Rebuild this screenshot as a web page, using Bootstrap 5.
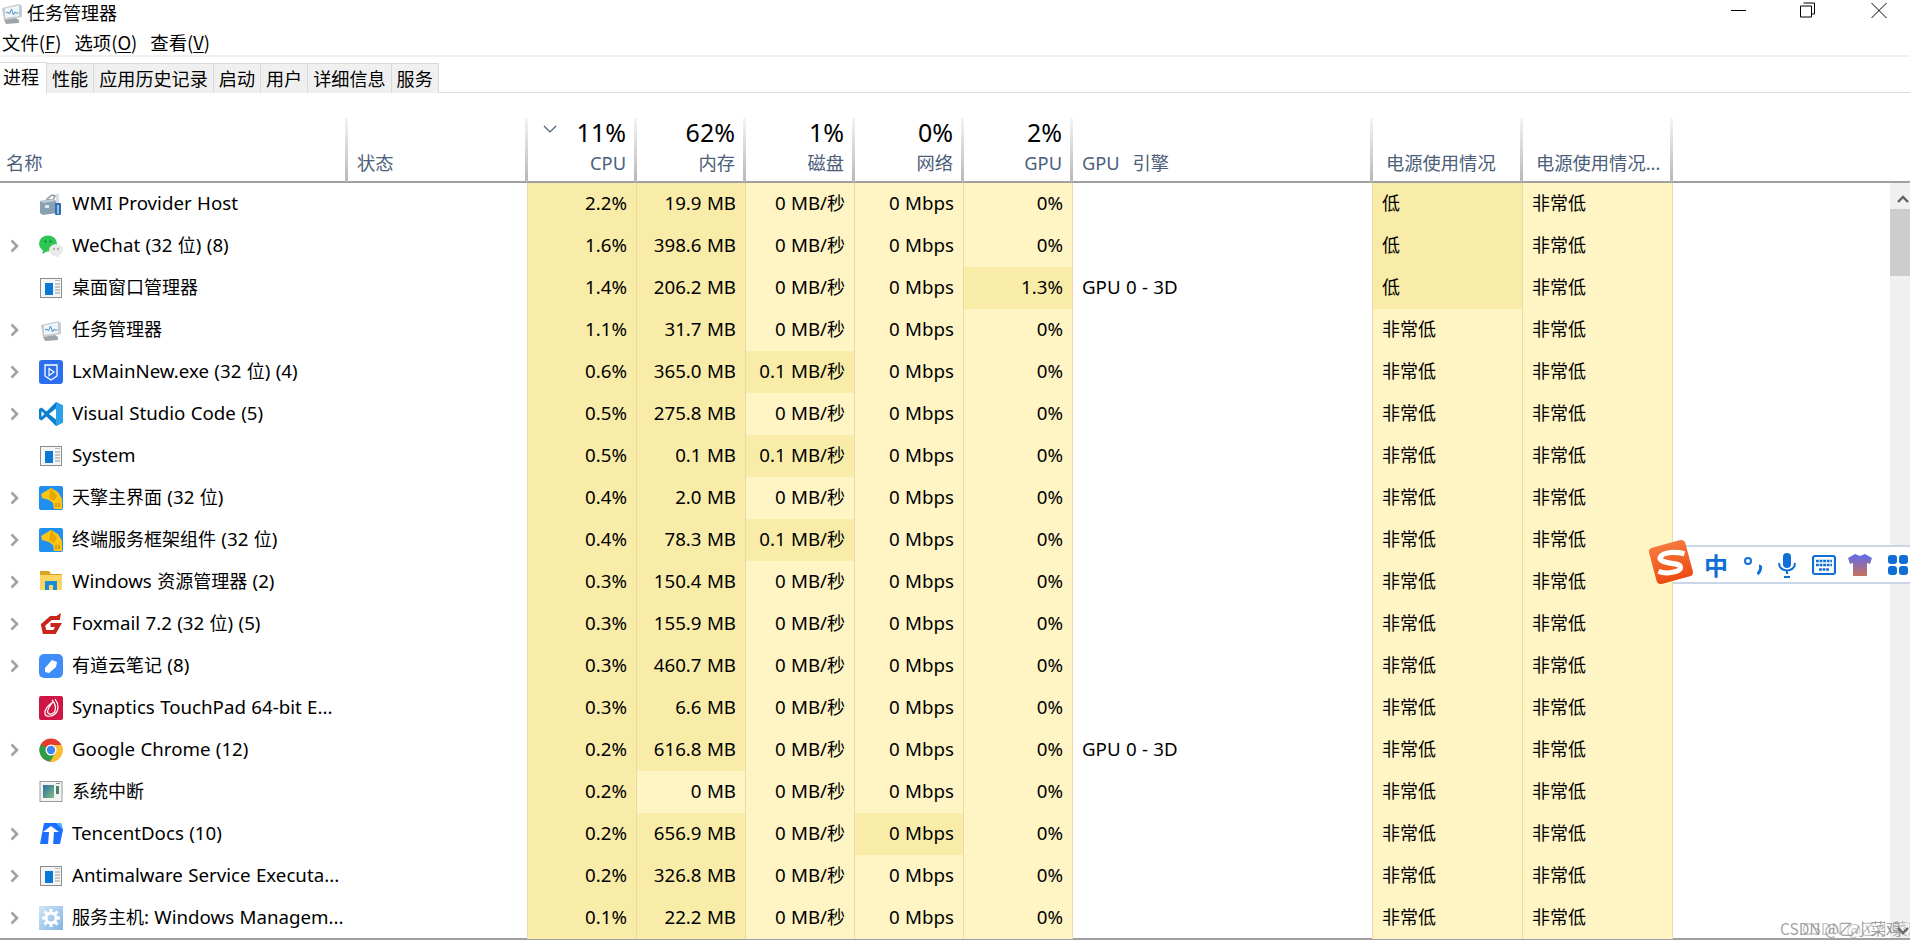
<!DOCTYPE html>
<html lang="zh">
<head>
    <meta charset="utf-8">
    <title>任务管理器</title>
    <link href="https://cdn.jsdelivr.net/npm/bootstrap@5.3.0/dist/css/bootstrap.min.css" rel="stylesheet">
    <style>
        html, body { height: 100%; }
        body { position: relative; width: 1910px; height: 948px; overflow: hidden; background: #fff; color: #000;
               font-family: "Noto Sans", "Noto Sans CJK SC", sans-serif; font-size: 18.7px; line-height: 1; word-spacing: .5px; }
        .cjk { font-family: "Noto Sans CJK SC", "Noto Sans", sans-serif; font-size: 18px; }
        .title-row { height: 28px; padding: 0 0 5px 27px; position: relative; }
        .title-row svg.app { position: absolute; left: 0; top: 1px; }
        .win-btn { position: absolute; top: 0; }
        .menu-row { height: 29px; padding: 1px 0 0 2px; gap: 13px; border-bottom: 2px solid #f0f0f0; }
        .menu-row.cjk { font-size: 18.4px; }
        .menu-row u { text-underline-offset: 2px; }
        .tm-tabs { margin-top: 5px; height: 31px; border-bottom: 1px solid #d9d9d9; }
        .tm-tabs.cjk { font-size: 18.1px; }
        .tm-tabs .nav-link { height: 30px; margin: 1px 0 0; padding: 0 5px; line-height: 28px; color: #000; background: #f0f0f0;
                             border: 1px solid #d9d9d9; border-left: 0; border-bottom: 0; border-radius: 0; }
        .tm-tabs .nav-link.active { height: 31px; margin-top: 0; padding: 0 0 0 3px; line-height: 27px; background: #fff; color: #000;
                                    border: 1px solid #d9d9d9; border-left: 0; border-bottom: 0; width: 47px; }
        .head-wrap { margin-top: 25px; border-bottom: 2px solid #a0a0a0; height: 65px; }
        .tm-grid { table-layout: fixed; width: 1673px; border-collapse: separate; border-spacing: 0; }
        .tm-grid th:nth-child(1), .tm-grid td:nth-child(1) { width: 348px; }
        .tm-grid th:nth-child(2), .tm-grid td:nth-child(2) { width: 180px; }
        .tm-grid th:nth-child(3), .tm-grid td:nth-child(3),
        .tm-grid th:nth-child(4), .tm-grid td:nth-child(4),
        .tm-grid th:nth-child(5), .tm-grid td:nth-child(5),
        .tm-grid th:nth-child(6), .tm-grid td:nth-child(6),
        .tm-grid th:nth-child(7), .tm-grid td:nth-child(7) { width: 109px; }
        .tm-grid th:nth-child(8), .tm-grid td:nth-child(8) { width: 300px; }
        .tm-grid th:nth-child(9), .tm-grid td:nth-child(9),
        .tm-grid th:nth-child(10), .tm-grid td:nth-child(10) { width: 150px; }
        .tm-grid th { height: 64px; padding: 0 9px; vertical-align: bottom; font-weight: 400; color: #4c607a;
                      background: linear-gradient(#f4f4f4, #b8b8b8) right top / 3px 100% no-repeat; position: relative; white-space: nowrap; }
        .tm-grid th .lbl { display: block; height: 30px; font-size: 18.3px; line-height: 22px; }
        .tm-grid th .lbl.gap-word { word-spacing: 8px; }
        .tm-grid th .lbl.pw-lbl { padding-left: 4px; }
        .tm-grid th .pct { display: block; font-size: 25px; line-height: 29px; height: 34px; color: #000; }
        .tm-grid th .sort-mark { position: absolute; left: 15px; top: 7px; }
        .tm-grid th.num { text-align: right; padding-right: 11px; }
        .tm-grid th.first { padding-left: 6px; }
        .body-wrap { height: 757px; border-bottom: 2px solid #a0a0a0; }
        .tm-grid td { height: 42px; padding: 0 9px 2px; vertical-align: middle; border-right: 1px solid #ecdaa2; white-space: nowrap; overflow: hidden; }
        .tm-grid td:first-child { border-right: 0; padding: 0; }
        .tm-grid td.num { text-align: right; padding-right: 9px; }
        .tm-grid td.lo { background: #fff4c4; }
        .tm-grid td.hi { background: #f9eca8; }
        .name-cell { position: relative; height: 42px; padding-left: 72px; line-height: 39px; }
        .name-cell .arrow { position: absolute; left: 10px; top: 14px; }
        .name-cell .appicon { position: absolute; left: 39px; top: 9px; }
        .scroll-track { width: 20px; margin-left: auto; background: #f0f0f0; position: relative; }
        .scroll-thumb { position: absolute; left: 0; top: 26px; width: 20px; height: 67px; background: #cdcdcd; }
        .scroll-btn { position: absolute; left: 7px; }
        .ime-bar { position: absolute; left: 1673px; top: 545px; width: 237px; height: 39px; background: #fff;
                   border-top: 2px solid #c9d6e6; border-bottom: 2px solid #c9d6e6; }
        .ime-bar > * { position: absolute; }
        .ime-logo { position: absolute; left: 1647px; top: 538px; }
        .ime-zh { left: 31px; top: 5px; font-weight: 700; color: #0f6fd6; line-height: 26px; }
        .ime-zh.cjk { font-size: 24px; }
        .mark-text { position: absolute; left: 1780px; top: 921px; color: rgba(120,120,120,.7); font-size: 15.5px; white-space: nowrap;
                     text-shadow: 22px 0 rgba(120,120,120,.45); }
        .mark-text.cjk { font-size: 15.5px; }
    </style>
</head>
<body>
    <svg width="0" height="0" class="position-absolute">
        <defs>
            <symbol id="ic-monitor" viewBox="0 0 24 24">
                <path d="M2 7l17-4 3 2v11l-18 3z" fill="#c4ccd2"/>
                <path d="M5 7.500l14-3v10.500l-14 2z" fill="#f0f5fa"/>
                <path d="M6 12l2-1 1.500 2 2-5 2 6 1.500-3 2 1.500 1.500-1" fill="none" stroke="#4b90cf" stroke-width="1"/>
                <path d="M4 19l12-2 3 2v3l-13 1z" fill="#9da5aa"/>
            </symbol>
            <symbol id="ic-wmi" viewBox="0 0 24 24">
                <path d="M8 7l5-4 3 1-2 4z" fill="none" stroke="#8d9499" stroke-width="1.500"/>
                <path d="M1 9l13-2 4 2v12l-14 2-3-2z" fill="#87a0b2"/>
                <path d="M1 9l13-2 4 2-14 2z" fill="#bdcbd5"/>
                <rect x="6" y="13" width="4" height="3" fill="#e4e9ec"/>
                <rect x="17" y="2" width="3" height="9" fill="#d8dde0"/>
                <rect x="16" y="11" width="6" height="12" rx="1" fill="#2f6db5"/>
                <rect x="18" y="13" width="2" height="9" fill="#8fc0ea"/>
            </symbol>
            <symbol id="ic-wechat" viewBox="0 0 24 24">
                <ellipse cx="9" cy="9.500" rx="9" ry="8" fill="#2dc653"/>
                <path d="M4 15l-.5 5 5-3z" fill="#2dc653"/>
                <circle cx="6.500" cy="7.500" r="1.100" fill="#0c7a2e"/><circle cx="11.500" cy="7.500" r="1.100" fill="#0c7a2e"/>
                <ellipse cx="17" cy="16" rx="7" ry="6" fill="#e9e9e9"/>
                <path d="M19 20l2 4-5-2z" fill="#e9e9e9"/>
                <circle cx="15" cy="15" r=".9" fill="#999"/><circle cx="19" cy="15" r=".9" fill="#999"/>
            </symbol>
            <symbol id="ic-window" viewBox="0 0 24 24">
                <rect x="1.500" y="2.500" width="21" height="19" fill="#f3f5f7" stroke="#8c8c8c"/>
                <rect x="6" y="7" width="8" height="12" fill="#0a78d7"/>
                <path d="M16 8h5M16 11h5M16 14h5M16 17h5" stroke="#9a9a9a"/>
                <path d="M16 4.500h5" stroke="#bbb"/>
            </symbol>
            <symbol id="ic-lx" viewBox="0 0 24 24">
                <rect width="24" height="24" rx="3" fill="#2b6fee"/>
                <path d="M6 5h12v11l-6 4-6-4z" fill="none" stroke="#fff" stroke-width="1.300"/>
                <path d="M10 8.500l5 3.500-5 3.500z" fill="none" stroke="#fff" stroke-width="1.200"/>
            </symbol>
            <symbol id="ic-code" viewBox="0 0 24 24">
                <path d="M17 0l7 3.500v17L17 24 7.500 14.500 2.500 18.500 0 17V7l2.500-1.500 5 4z" fill="#0b7fcf"/>
                <path d="M17 0l7 3.500v17L17 24z" fill="#2aa2ea"/>
                <path d="M17 6.500v11L10 12z" fill="#fff"/>
                <path d="M2.500 9v6L5.500 12z" fill="#fff"/>
            </symbol>
            <symbol id="ic-tianqing" viewBox="0 0 24 24">
                <rect width="24" height="24" rx="2" fill="#1f8ff0"/>
                <path d="M2 8l10-6 7 4 4 7v10h-8l-1-6-4-3-7-2z" fill="#ffc412"/>
                <path d="M12 2l6 8-3 5-5-3z" fill="#e6a800"/>
                <path d="M17 21v-4M20 21v-4" stroke="#a87a00"/>
            </symbol>
            <symbol id="ic-folder" viewBox="0 0 24 24">
                <path d="M1 1h9l2 3h11v3H1z" fill="#d9a520"/>
                <rect x="1" y="5" width="22" height="15" fill="#fcd664"/>
                <path d="M6 11h12v9h-4v-5h-4v5H6z" fill="#1b8ad8"/>
            </symbol>
            <symbol id="ic-foxmail" viewBox="0 0 24 24">
                <path d="M21 6h-9l-8 7 1.500 7h10l4-7h-8" fill="none" stroke="#c8261c" stroke-width="4"/>
                <path d="M16 5l6-4-1 6z" fill="#c8261c"/>
            </symbol>
            <symbol id="ic-youdao" viewBox="0 0 24 24">
                <rect width="24" height="24" rx="5" fill="#3f8df8"/>
                <path d="M6 14l7-8 5 2-1 5-7 6-4-1z" fill="#fff"/>
            </symbol>
            <symbol id="ic-synaptics" viewBox="0 0 24 24">
                <rect width="24" height="24" rx="2" fill="#cf1543"/>
                <path d="M16 3c4 5 4 11 0 15-3 3-9 3-10 0-1-4 3-9 8-12-3 4-7 8-5 11 2 2 6 1 7-2 1-4 0-8-3-11" fill="none" stroke="#fff" stroke-width="1.200"/>
            </symbol>
            <symbol id="ic-chrome" viewBox="0 0 24 24">
                <circle cx="12" cy="12" r="11.500" fill="#e33b2e"/>
                <path d="M12 12L1.800 6.500A11.500 11.500 0 0 0 12 23.500L17 14z" fill="#2f9e44"/>
                <path d="M12 7h10.500A11.500 11.500 0 0 1 11 23.500L17 14z" fill="#fbc02d"/>
                <circle cx="12" cy="12" r="5.500" fill="#fff"/>
                <circle cx="12" cy="12" r="4.200" fill="#4285f4"/>
            </symbol>
            <symbol id="ic-irq" viewBox="0 0 24 24">
                <defs><linearGradient id="irq-g" x1="0" y1="0" x2="1" y2="1"><stop offset="0" stop-color="#2f6fa5"/><stop offset="1" stop-color="#7dbd80"/></linearGradient></defs>
                <rect x="1" y="1.500" width="22" height="20" fill="#f2f4f3" stroke="#9a9a9a"/>
                <rect x="4" y="5" width="11" height="13" fill="url(#irq-g)"/>
                <rect x="17" y="6" width="3" height="8" fill="#4a7f6a"/>
                <path d="M17 3.500h4" stroke="#888"/>
            </symbol>
            <symbol id="ic-docs" viewBox="0 0 24 24">
                <path d="M5 1h17l2 7-3 14H1z" fill="#1e6fff"/>
                <path d="M17 1h5l2 7z" fill="#46b4ff"/>
                <path d="M12 4l8 6h-5l-1 13H9l1-13H4z" fill="#fff"/>
            </symbol>
            <symbol id="ic-gear" viewBox="0 0 24 24">
                <defs><linearGradient id="gear-g" x1="0" y1="0" x2="1" y2="1"><stop offset="0" stop-color="#cfe6f8"/><stop offset="1" stop-color="#86b3e2"/></linearGradient></defs>
                <rect width="24" height="24" fill="url(#gear-g)"/>
                <circle cx="12" cy="12" r="5" fill="none" stroke="#fff" stroke-width="3"/>
                <path d="M12 3v4M12 17v4M3 12h4M17 12h4M5.500 5.500l3 3M15.500 15.500l3 3M18.500 5.500l-3 3M8.500 15.500l-3 3" stroke="#fff" stroke-width="3"/>
            </symbol>
            <symbol id="ic-arrow" viewBox="0 0 9 14">
                <path d="M1.500 1.500L7 7l-5.500 5.500" fill="none" stroke="#a3a3a3" stroke-width="2.600"/>
            </symbol>
        </defs>
    </svg>

    <div class="title-row d-flex align-items-center cjk">
        <svg class="app" width="24" height="24"><use href="#ic-monitor"/></svg>
        <span>任务管理器</span>
        <svg class="win-btn" style="left:1731px" width="15" height="20"><path d="M0 10.500h15" stroke="#000"/></svg>
        <svg class="win-btn" style="left:1800px" width="15" height="20"><path d="M3.500 3.500h11v11h-3M.5 6.500h11v11H.5z" fill="#fff" stroke="#000" transform="translate(0 -.5)"/></svg>
        <svg class="win-btn" style="left:1871px" width="16" height="20"><path d="M.5 3l15 15M15.500 3l-15 15" stroke="#000"/></svg>
    </div>
    <div class="menu-row d-flex align-items-center cjk">
        <span>文件(<u>F</u>)</span>
        <span>选项(<u>O</u>)</span>
        <span>查看(<u>V</u>)</span>
    </div>
    <ul class="nav nav-tabs tm-tabs cjk">
        <li class="nav-item"><a class="nav-link active" href="#">进程</a></li>
        <li class="nav-item"><a class="nav-link" href="#">性能</a></li>
        <li class="nav-item"><a class="nav-link" href="#">应用历史记录</a></li>
        <li class="nav-item"><a class="nav-link" href="#">启动</a></li>
        <li class="nav-item"><a class="nav-link" href="#">用户</a></li>
        <li class="nav-item"><a class="nav-link" href="#">详细信息</a></li>
        <li class="nav-item"><a class="nav-link" href="#">服务</a></li>
    </ul>

    <div class="head-wrap">
        <table class="tm-grid">
            <thead>
                <tr>
                    <th class="first"><span class="lbl">名称</span></th>
                    <th><span class="lbl">状态</span></th>
                    <th class="num">
                        <svg class="sort-mark" width="14" height="8"><path d="M1 1l6 6 6-6" fill="none" stroke="#4c607a" stroke-width="1.200"/></svg>
                        <span class="pct">11%</span><span class="lbl">CPU</span>
                    </th>
                    <th class="num"><span class="pct">62%</span><span class="lbl">内存</span></th>
                    <th class="num"><span class="pct">1%</span><span class="lbl">磁盘</span></th>
                    <th class="num"><span class="pct">0%</span><span class="lbl">网络</span></th>
                    <th class="num"><span class="pct">2%</span><span class="lbl">GPU</span></th>
                    <th><span class="lbl gap-word">GPU 引擎</span></th>
                    <th><span class="lbl pw-lbl">电源使用情况</span></th>
                    <th><span class="lbl pw-lbl">电源使用情况...</span></th>
                </tr>
            </thead>
        </table>
    </div>

    <div class="body-wrap d-flex">
        <table class="tm-grid align-self-start">
            <tbody id="rows"></tbody>
        </table>
        <div class="scroll-track">
            <svg class="scroll-btn" style="top:12px" width="12" height="8"><path d="M1 7l5-5 5 5" fill="none" stroke="#606060" stroke-width="2.400"/></svg>
            <div class="scroll-thumb"></div>
            <svg class="scroll-btn" style="top:744px" width="12" height="8"><path d="M1 1l5 5 5-5" fill="none" stroke="#606060" stroke-width="2.400"/></svg>
        </div>
    </div>

    <div class="ime-bar">
        <span class="ime-zh cjk">中</span>
        <svg style="left:71px;top:8px" width="20" height="24"><circle cx="4" cy="6" r="3" fill="none" stroke="#0f6fd6" stroke-width="2"/><path d="M15 11c1.500 0 2 1 1.500 3-.5 2-1.500 4-3 5" fill="none" stroke="#0f6fd6" stroke-width="3"/></svg>
        <svg style="left:104px;top:5px" width="20" height="28"><rect x="6" y="1" width="8" height="15" rx="4" fill="#0f6fd6"/><path d="M2 11c0 10 16 10 16 0M10 19v3M7 25h6" fill="none" stroke="#0f6fd6" stroke-width="2"/></svg>
        <svg style="left:139px;top:7px" width="24" height="22"><rect x="1" y="2" width="22" height="18" rx="2" fill="none" stroke="#0f6fd6" stroke-width="2.200"/><path d="M4 7h16M4 11h16M7 15.500h10" stroke="#0f6fd6" stroke-width="2.600" stroke-dasharray="2.800 .8"/></svg>
        <svg style="left:175px;top:6px" width="24" height="24"><defs><linearGradient id="shirt-g" x1="0" y1="0" x2="0" y2="1"><stop offset="0" stop-color="#5a6cf0"/><stop offset="1" stop-color="#c9705e"/></linearGradient></defs><path d="M7 1l5 2 5-2 7 4-2 6-3-1v13H5V10l-3 1-2-6z" fill="url(#shirt-g)"/></svg>
        <svg style="left:214px;top:7px" width="22" height="22"><g fill="#0f6fd6"><rect x="1" y="1" width="9" height="9" rx="3"/><rect x="12" y="1" width="9" height="9" rx="3"/><rect x="1" y="12" width="9" height="9" rx="3"/><rect x="12" y="12" width="9" height="9" rx="3"/></g></svg>
    </div>
    <svg class="ime-logo" width="50" height="48" viewBox="0 0 48 46">
        <defs><linearGradient id="sg-g" x1="0" y1="0" x2="0" y2="1"><stop offset="0" stop-color="#f5793f"/><stop offset="1" stop-color="#ee4b10"/></linearGradient></defs>
        <rect x="5" y="5" width="36" height="36" rx="4" fill="url(#sg-g)" transform="rotate(-15 23 23)"/>
        <path d="M36 15c-8-2-20-2-23 3s10 6 15 7 6 5 0 7-12 2-17 0" fill="none" stroke="#fff" stroke-width="5"/>
    </svg>

    <span class="mark-text cjk">CSDN @乙小菜鸡</span>

    <script>
        // name, icon, expandable, cpu, mem, disk, net, gpu, engine, power, trend, then which cells are darker
        const procs = [
            ['WMI Provider Host', 'wmi', 0, '2.2%', '19.9 MB', '0 MB/秒', '0 Mbps', '0%', '', '低', '非常低', 'pw'],
            ['WeChat (32 位) (8)', 'wechat', 1, '1.6%', '398.6 MB', '0 MB/秒', '0 Mbps', '0%', '', '低', '非常低', 'pw'],
            ['桌面窗口管理器', 'window', 0, '1.4%', '206.2 MB', '0 MB/秒', '0 Mbps', '1.3%', 'GPU 0 - 3D', '低', '非常低', 'pw gpu'],
            ['任务管理器', 'monitor', 1, '1.1%', '31.7 MB', '0 MB/秒', '0 Mbps', '0%', '', '非常低', '非常低', ''],
            ['LxMainNew.exe (32 位) (4)', 'lx', 1, '0.6%', '365.0 MB', '0.1 MB/秒', '0 Mbps', '0%', '', '非常低', '非常低', 'disk'],
            ['Visual Studio Code (5)', 'code', 1, '0.5%', '275.8 MB', '0 MB/秒', '0 Mbps', '0%', '', '非常低', '非常低', ''],
            ['System', 'window', 0, '0.5%', '0.1 MB', '0.1 MB/秒', '0 Mbps', '0%', '', '非常低', '非常低', 'disk'],
            ['天擎主界面 (32 位)', 'tianqing', 1, '0.4%', '2.0 MB', '0 MB/秒', '0 Mbps', '0%', '', '非常低', '非常低', ''],
            ['终端服务框架组件 (32 位)', 'tianqing', 1, '0.4%', '78.3 MB', '0.1 MB/秒', '0 Mbps', '0%', '', '非常低', '非常低', 'disk'],
            ['Windows 资源管理器 (2)', 'folder', 1, '0.3%', '150.4 MB', '0 MB/秒', '0 Mbps', '0%', '', '非常低', '非常低', ''],
            ['Foxmail 7.2 (32 位) (5)', 'foxmail', 1, '0.3%', '155.9 MB', '0 MB/秒', '0 Mbps', '0%', '', '非常低', '非常低', ''],
            ['有道云笔记 (8)', 'youdao', 1, '0.3%', '460.7 MB', '0 MB/秒', '0 Mbps', '0%', '', '非常低', '非常低', ''],
            ['Synaptics TouchPad 64-bit E...', 'synaptics', 0, '0.3%', '6.6 MB', '0 MB/秒', '0 Mbps', '0%', '', '非常低', '非常低', ''],
            ['Google Chrome (12)', 'chrome', 1, '0.2%', '616.8 MB', '0 MB/秒', '0 Mbps', '0%', 'GPU 0 - 3D', '非常低', '非常低', ''],
            ['系统中断', 'irq', 0, '0.2%', '0 MB', '0 MB/秒', '0 Mbps', '0%', '', '非常低', '非常低', 'nomem'],
            ['TencentDocs (10)', 'docs', 1, '0.2%', '656.9 MB', '0 MB/秒', '0 Mbps', '0%', '', '非常低', '非常低', 'net'],
            ['Antimalware Service Executa...', 'window', 1, '0.2%', '326.8 MB', '0 MB/秒', '0 Mbps', '0%', '', '非常低', '非常低', ''],
            ['服务主机: Windows Managem...', 'gear', 1, '0.1%', '22.2 MB', '0 MB/秒', '0 Mbps', '0%', '', '非常低', '非常低', '']
        ];

        // CJK runs sit at 18px, latin is sized up to get Segoe's widths
        const sized = s => s.replace(/[\u4e00-\u9fff]+/g, m => `<span class="cjk">${m}</span>`);

        document.getElementById('rows').innerHTML = procs.map(p => {
            const dark = p[11].split(' ');
            const tone = flag => dark.includes(flag) ? 'hi' : 'lo';
            return `<tr>
                <td><div class="name-cell">
                    ${p[2] ? '<svg class="arrow" width="9" height="14"><use href="#ic-arrow"/></svg>' : ''}
                    <svg class="appicon" width="24" height="24"><use href="#ic-${p[1]}"/></svg>${sized(p[0])}
                </div></td>
                <td></td>
                <td class="num hi">${p[3]}</td>
                <td class="num ${dark.includes('nomem') ? 'lo' : 'hi'}">${p[4]}</td>
                <td class="num ${tone('disk')}">${sized(p[5])}</td>
                <td class="num ${tone('net')}">${p[6]}</td>
                <td class="num ${tone('gpu')}">${p[7]}</td>
                <td>${p[8]}</td>
                <td class="${tone('pw')}">${sized(p[9])}</td>
                <td class="lo">${sized(p[10])}</td>
            </tr>`;
        }).join('');
    </script>
    <script src="https://cdn.jsdelivr.net/npm/bootstrap@5.3.0/dist/js/bootstrap.bundle.min.js"></script>
</body>
</html>
